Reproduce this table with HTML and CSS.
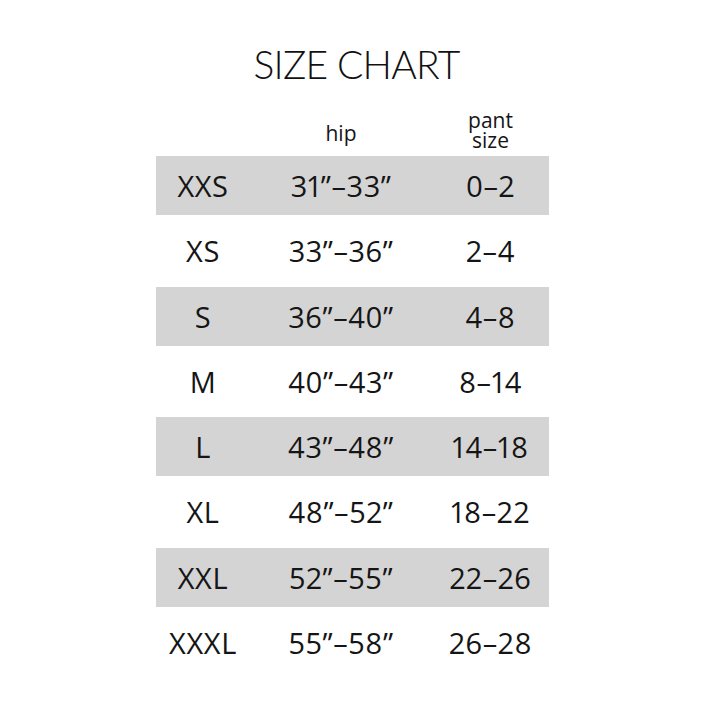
FILE: index.html
```html
<!DOCTYPE html>
<html>
<head>
<meta charset="utf-8">
<link rel="stylesheet" href="styles.css">
</head>
<body>
<div class="page">
  <h1 class="title">SIZE CHART</h1>
  <div class="chart">
    <div class="head">
      <span></span>
      <span class="h-hip">hip</span>
      <span class="h-pant">pant<br>size</span>
    </div>
    <div class="rows">
      <div class="row shade"><span>XXS</span><span>31”–33”</span><span>0–2</span></div>
      <div class="row"><span>XS</span><span>33”–36”</span><span>2–4</span></div>
      <div class="row shade"><span>S</span><span>36”–40”</span><span>4–8</span></div>
      <div class="row"><span>M</span><span>40”–43”</span><span>8–14</span></div>
      <div class="row shade"><span>L</span><span>43”–48”</span><span>14–18</span></div>
      <div class="row"><span>XL</span><span>48”–52”</span><span>18–22</span></div>
      <div class="row shade"><span>XXL</span><span>52”–55”</span><span>22–26</span></div>
      <div class="row"><span>XXXL</span><span>55”–58”</span><span>26–28</span></div>
    </div>
  </div>
</div>
</body>
</html>
```
FILE: styles.css
```css
html, body {
  margin: 0;
  padding: 0;
  background: #ffffff;
}
.page {
  width: 713px;
  height: 713px;
  color: #151515;
  font-family: "Open Sans", "DejaVu Sans", sans-serif;
}
.title {
  margin: 0;
  padding-top: 40px;
  height: 48px;
  text-align: center;
  font-family: "Lato", "DejaVu Sans", sans-serif;
  font-weight: 300;
  font-size: 39px;
  line-height: 48px;
  letter-spacing: -0.8px;
  color: #111111;
}
.chart {
  margin-left: 156px;
  width: 393px;
}
.head {
  display: grid;
  grid-template-columns: 94px 182px 117px;
  height: 68px;
  align-items: end;
  box-sizing: border-box;
  text-align: center;
}
.h-hip {
  font-size: 21px;
  line-height: 22px;
  padding-bottom: 12px;
}
.h-pant {
  font-size: 21px;
  line-height: 20px;
  padding-bottom: 6px;
}
.rows {
  display: grid;
  row-gap: 6.3px;
}
.row {
  display: grid;
  grid-template-columns: 94px 182px 117px;
  height: 59px;
  align-items: center;
  text-align: center;
  font-size: 29px;
  font-weight: 400;
  letter-spacing: 0.6px;
  font-variant-numeric: proportional-nums;
}
.shade {
  background: #d4d4d4;
}
```
